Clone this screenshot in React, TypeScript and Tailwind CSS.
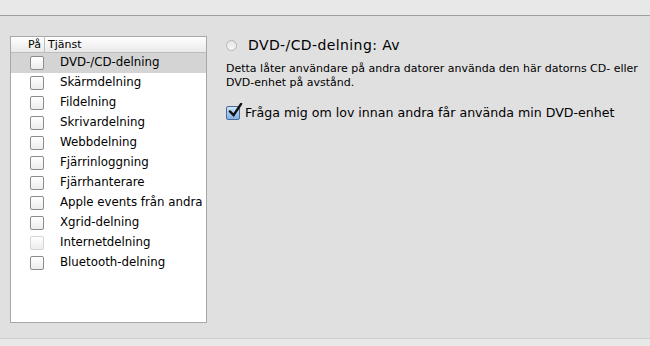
import React from "react";

const services = [
  { name: "DVD-/CD-delning", selected: true },
  { name: "Skärmdelning" },
  { name: "Fildelning" },
  { name: "Skrivardelning" },
  { name: "Webbdelning" },
  { name: "Fjärrinloggning" },
  { name: "Fjärrhanterare" },
  { name: "Apple events från andra" },
  { name: "Xgrid-delning" },
  { name: "Internetdelning", dim: true },
  { name: "Bluetooth-delning" },
];

const Box = ({ dim }: { dim?: boolean }) => (
  <div
    className={`w-[14px] h-[14px] rounded-[2px] border bg-gradient-to-b from-white to-[#ececec] ${
      dim ? "border-[#d6d6d6]" : "border-[#8c8c8c]"
    }`}
  />
);

const App = () => {
  return (
    <div
      className="w-[650px] h-[346px] flex flex-col bg-[#e0e0e0] text-black overflow-hidden"
      style={{ fontFamily: '"DejaVu Sans", "Liberation Sans", sans-serif' }}>
      <div className="h-[16px] bg-[#e8e8e8] border-b border-[#9f9f9f]" />
      <div className="flex-1 flex pt-[20px] pl-[10px]">
        <div className="w-[197px] h-[287px] bg-white border border-[#a8a8a8] flex flex-col">
          <div className="flex h-[16px] bg-gradient-to-b from-white to-[#e9e9e9] border-b border-[#bdbdbd] text-[11px] leading-[15px]">
            <div className="w-[34px] border-r border-[#bdbdbd] pl-[17px]">På</div>
            <div className="pl-[3px]">Tjänst</div>
          </div>
          {services.map((s) => (
            <div
              key={s.name}
              className={`flex items-center h-[20px] text-[11.8px] whitespace-nowrap ${s.selected ? "bg-[#d4d4d4]" : ""}`}>
              <div className="w-[49px] flex justify-center pl-[2px]">
                <Box dim={s.dim} />
              </div>
              <span>{s.name}</span>
            </div>
          ))}
        </div>
        <div className="flex flex-col pl-[19px] pt-[1px]">
          <div className="flex items-center h-[16px] gap-[11px]">
            <div className="w-[11px] h-[11px] rounded-full border border-[#b4b4b4] bg-gradient-to-b from-[#e6e6e6] to-[#f6f6f6]" />
            <span className="text-[14px] tracking-[0.4px]">DVD-/CD-delning: Av</span>
          </div>
          <p className="mt-[9px] text-[11px] leading-[14px] w-[415px]">
            Detta låter användare på andra datorer använda den här datorns CD- eller
            <br />
            DVD-enhet på avstånd.
          </p>
          <div className="flex items-center mt-[14px] gap-[5px]">
            <div className="relative w-[14px] h-[14px] rounded-[2px] border border-[#4a6b99] bg-gradient-to-b from-[#cfe3f7] to-[#7fb0e3]">
              <svg viewBox="0 0 16 16" className="absolute left-[1px] -top-[4px] w-[15px] h-[15px]">
                <path d="M2 9 L6 13 L14 1" fill="none" stroke="#111" strokeWidth="2.6" strokeLinecap="round" />
              </svg>
            </div>
            <span className="text-[12.6px] whitespace-nowrap">Fråga mig om lov innan andra får använda min DVD-enhet</span>
          </div>
        </div>
      </div>
      <div className="h-[8px] bg-[#e8e8e8] border-t border-[#cfcfcf]" />
    </div>
  );
};

export default App;
